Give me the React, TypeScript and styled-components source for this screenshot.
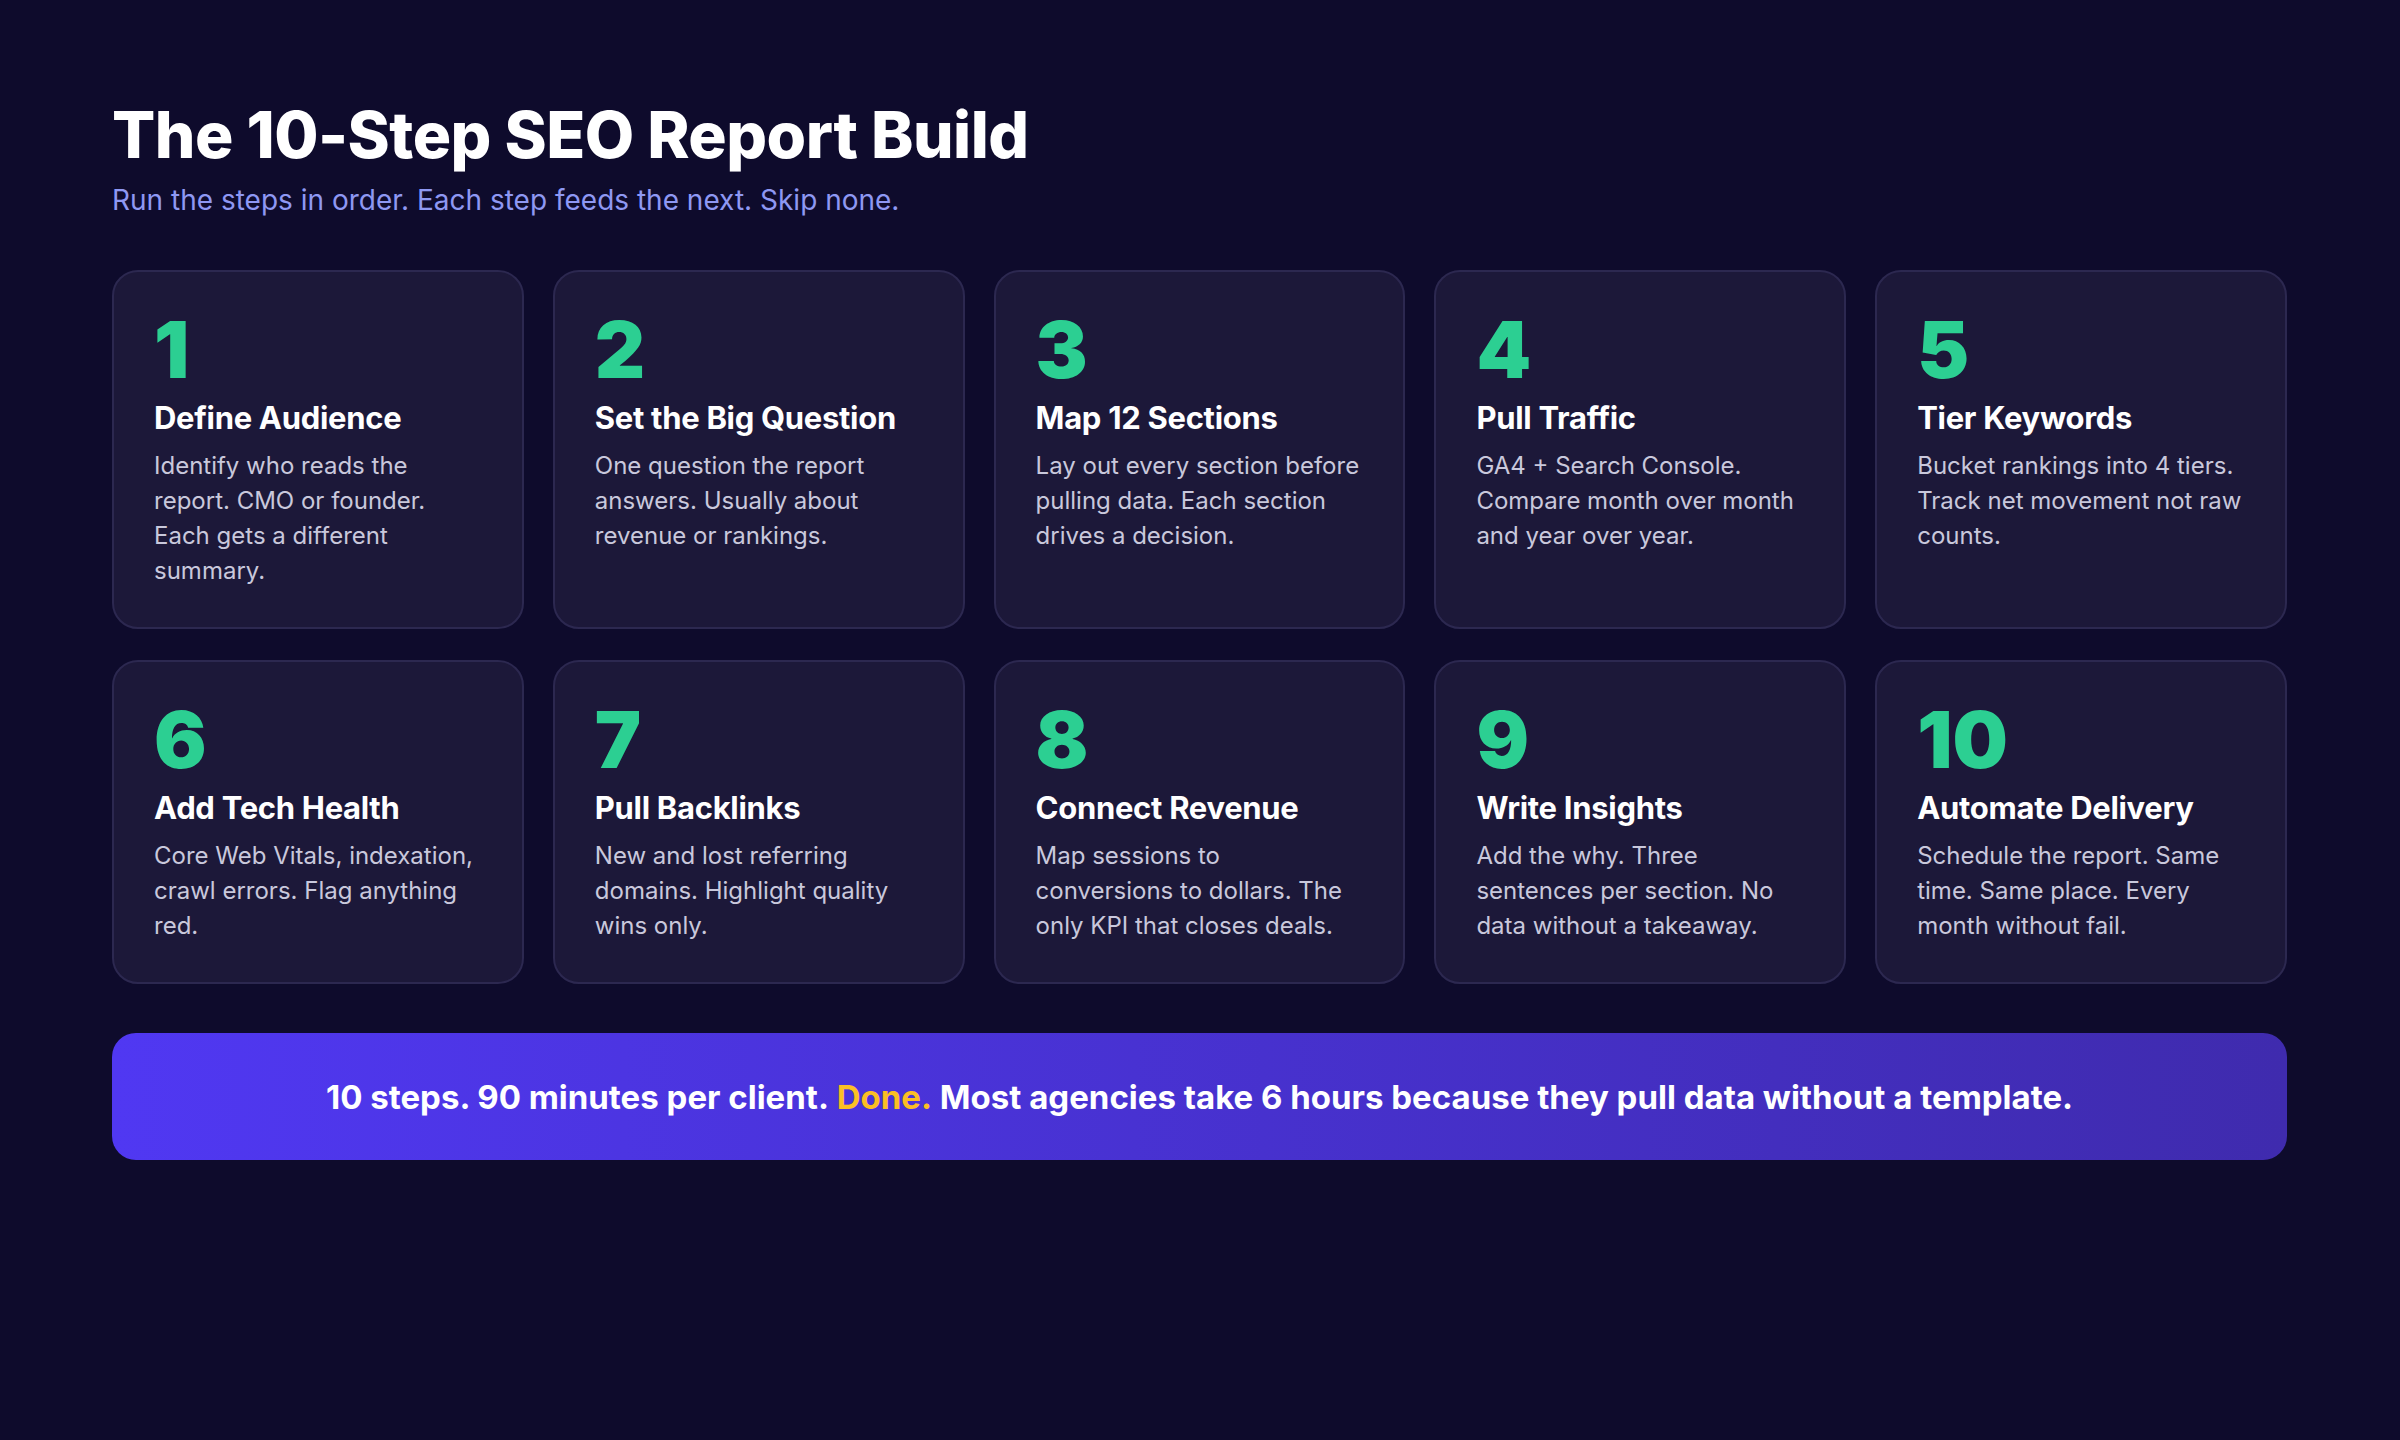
import React from "react";
import styled, { createGlobalStyle } from "styled-components";

const Global = createGlobalStyle`
  html, body { margin: 0; background: #0e0b2c; }
  body { font-family: Inter, "Noto Sans", sans-serif; }
`;

const Page = styled.div`
  width: 2400px; height: 1440px; box-sizing: border-box;
  padding: 96px 113px 0 112px; background: #0e0b2c;
`;
const Title = styled.h1`
  margin: 0; color: #fff; font-size: 64px; font-weight: 800; letter-spacing: -0.5px; line-height: 78px;
`;
const Sub = styled.p`
  margin: 8px 0 0; color: #8e98f3; font-size: 28px; line-height: 36px;
`;
const Grid = styled.div`
  margin-top: 52px; display: grid; grid-template-columns: repeat(5, 1fr);
  column-gap: 29px; row-gap: 31px; grid-template-rows: 359px 324px;
`;
const Card = styled.div`
  background: #1c1839; border: 2px solid #2c2850; border-radius: 26px;
  padding: 38px 40px; box-sizing: border-box;
`;
const Num = styled.div`
  color: #2ccf92; font-size: 78px; font-weight: 900; line-height: 80px;
`;
const Head = styled.div`
  margin-top: 8px; color: #fff; font-size: 31px; font-weight: 700; line-height: 40px; letter-spacing: -0.3px;
`;
const Body = styled.div`
  margin-top: 10px; color: #c9c8dc; font-size: 24px; line-height: 35px;
`;
const Banner = styled.div`
  margin-top: 49px; height: 127px; border-radius: 24px;
  background: linear-gradient(90deg, #5038f2, #3f2bae);
  display: flex; align-items: center; justify-content: center;
  color: #fff; font-size: 33px; font-weight: 700;
`;
const Hi = styled.span` color: #fbbf24; `;

const steps = [
  ["Define Audience", "Identify who reads the report. CMO or founder. Each gets a different summary."],
  ["Set the Big Question", "One question the report answers. Usually about revenue or rankings."],
  ["Map 12 Sections", "Lay out every section before pulling data. Each section drives a decision."],
  ["Pull Traffic", "GA4 + Search Console. Compare month over month and year over year."],
  ["Tier Keywords", "Bucket rankings into 4 tiers. Track net movement not raw counts."],
  ["Add Tech Health", "Core Web Vitals, indexation, crawl errors. Flag anything red."],
  ["Pull Backlinks", "New and lost referring domains. Highlight quality wins only."],
  ["Connect Revenue", "Map sessions to conversions to dollars. The only KPI that closes deals."],
  ["Write Insights", "Add the why. Three sentences per section. No data without a takeaway."],
  ["Automate Delivery", "Schedule the report. Same time. Same place. Every month without fail."],
];

export default function App() {
  return (
    <Page>
      <Global />
      <Title>The 10-Step SEO Report Build</Title>
      <Sub>Run the steps in order. Each step feeds the next. Skip none.</Sub>
      <Grid>
        {steps.map(([h, b], i) => (
          <Card key={i}>
            <Num>{i + 1}</Num>
            <Head>{h}</Head>
            <Body>{b}</Body>
          </Card>
        ))}
      </Grid>
      <Banner>
        10 steps. 90 minutes per client.&nbsp;<Hi>Done.</Hi>&nbsp;Most agencies take 6 hours because they pull data without a template.
      </Banner>
    </Page>
  );
}
